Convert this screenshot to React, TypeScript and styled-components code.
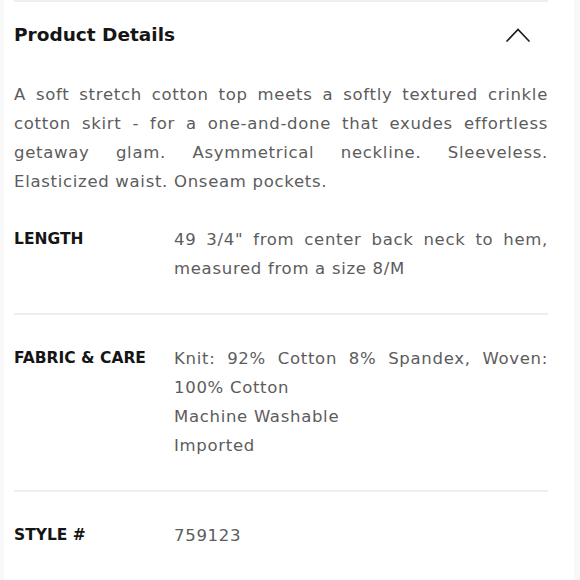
import React from 'react';
import styled, { createGlobalStyle } from 'styled-components';

const GlobalStyle = createGlobalStyle`
  html, body {
    margin: 0;
    padding: 0;
    background: #ffffff;
  }
  body {
    font-family: "DejaVu Sans", "Open Sans", sans-serif;
    -webkit-font-smoothing: antialiased;
  }
`;

const Page = styled.div`
  min-height: 580px;
  box-sizing: border-box;
  border-left: 4px solid #f8f8f8;
  border-right: 6px solid #f8f8f8;
  padding: 0 26px 0 10px;
`;

const Section = styled.section`
  border-top: 2px solid #eeeeee;
`;

const Header = styled.div`
  display: flex;
  align-items: center;
  justify-content: space-between;
  padding: 19px 18px 19px 0;
`;

const Title = styled.h2`
  margin: 0;
  font-size: 18.5px;
  line-height: 28px;
  font-weight: 700;
  color: #151515;
`;

const Chevron = styled.svg`
  width: 24px;
  height: 14px;
  display: block;
`;

const Description = styled.div`
  margin-top: 12px;
`;

const Text = styled.div`
  font-size: 16.5px;
  line-height: 29px;
  color: #5c5c5c;
  letter-spacing: 0.7px;
  white-space: nowrap;
`;

// a wrapped line that is stretched edge to edge, like the justified source text
const Line = styled(Text)<{ $fill?: boolean }>`
  text-align: ${p => (p.$fill ? 'justify' : 'left')};
  text-align-last: ${p => (p.$fill ? 'justify' : 'left')};
`;

const Row = styled.div<{ $last?: boolean }>`
  display: grid;
  grid-template-columns: 160px 1fr;
  padding: 29px 0 30px;
  border-bottom: ${p => (p.$last ? 'none' : '2px solid #eeeeee')};
`;

const Label = styled.div`
  font-size: 15.5px;
  line-height: 29px;
  font-weight: 700;
  color: #151515;
`;

const description = [
  { text: 'A soft stretch cotton top meets a softly textured crinkle', fill: true },
  { text: 'cotton skirt - for a one-and-done that exudes effortless', fill: true },
  { text: 'getaway glam. Asymmetrical neckline. Sleeveless.', fill: true },
  { text: 'Elasticized waist. Onseam pockets.', fill: false },
];

const details = [
  {
    label: 'LENGTH',
    lines: [
      { text: '49 3/4" from center back neck to hem,', fill: true },
      { text: 'measured from a size 8/M', fill: false },
    ],
  },
  {
    label: 'FABRIC & CARE',
    lines: [
      { text: 'Knit: 92% Cotton 8% Spandex, Woven:', fill: true },
      { text: '100% Cotton', fill: false },
      { text: 'Machine Washable', fill: false },
      { text: 'Imported', fill: false },
    ],
  },
  {
    label: 'STYLE #',
    lines: [{ text: '759123', fill: false }],
  },
];

export default function App() {
  return (
    <>
      <GlobalStyle />
      <Page>
        <Section>
          <Header>
            <Title>Product Details</Title>
            <Chevron viewBox="0 0 24 14" fill="none">
              <path d="M1 13L12 1.5L23 13" stroke="#1a1a1a" strokeWidth="1.7" strokeLinecap="round" />
            </Chevron>
          </Header>
          <Description>
            {description.map(l => (
              <Line key={l.text} $fill={l.fill}>
                {l.text}
              </Line>
            ))}
          </Description>
          {details.map((d, i) => (
            <Row key={d.label} $last={i === details.length - 1}>
              <Label>{d.label}</Label>
              <div>
                {d.lines.map(l => (
                  <Line key={l.text} $fill={l.fill}>
                    {l.text}
                  </Line>
                ))}
              </div>
            </Row>
          ))}
        </Section>
      </Page>
    </>
  );
}
